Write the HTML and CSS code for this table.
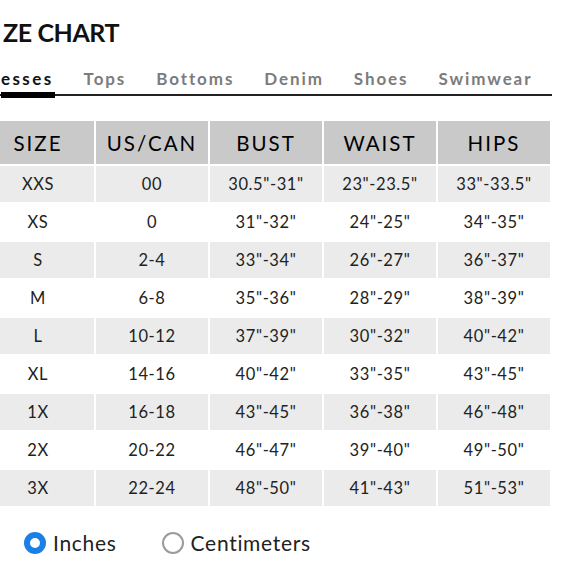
FILE: index.html
```html
<!DOCTYPE html>
<html>
<head>
<meta charset="utf-8">
<link rel="stylesheet" href="styles.css">
</head>
<body>
<div class="page">
  <h1 class="title">ZE CHART</h1>
  <nav class="tabs">
    <span class="tab active">esses</span>
    <span class="tab">Tops</span>
    <span class="tab">Bottoms</span>
    <span class="tab">Denim</span>
    <span class="tab">Shoes</span>
    <span class="tab">Swimwear</span>
  </nav>
  <table class="chart">
    <thead>
      <tr><th>SIZE</th><th>US/CAN</th><th>BUST</th><th>WAIST</th><th>HIPS</th></tr>
    </thead>
    <tbody>
      <tr class="shade"><td>XXS</td><td>00</td><td>30.5"-31"</td><td>23"-23.5"</td><td>33"-33.5"</td></tr>
      <tr><td>XS</td><td>0</td><td>31"-32"</td><td>24"-25"</td><td>34"-35"</td></tr>
      <tr class="shade"><td>S</td><td>2-4</td><td>33"-34"</td><td>26"-27"</td><td>36"-37"</td></tr>
      <tr><td>M</td><td>6-8</td><td>35"-36"</td><td>28"-29"</td><td>38"-39"</td></tr>
      <tr class="shade"><td>L</td><td>10-12</td><td>37"-39"</td><td>30"-32"</td><td>40"-42"</td></tr>
      <tr><td>XL</td><td>14-16</td><td>40"-42"</td><td>33"-35"</td><td>43"-45"</td></tr>
      <tr class="shade"><td>1X</td><td>16-18</td><td>43"-45"</td><td>36"-38"</td><td>46"-48"</td></tr>
      <tr><td>2X</td><td>20-22</td><td>46"-47"</td><td>39"-40"</td><td>49"-50"</td></tr>
      <tr class="shade"><td>3X</td><td>22-24</td><td>48"-50"</td><td>41"-43"</td><td>51"-53"</td></tr>
    </tbody>
  </table>
  <div class="units">
    <label class="unit"><span class="radio on"></span>Inches</label>
    <label class="unit"><span class="radio"></span>Centimeters</label>
  </div>
</div>
</body>
</html>
```
FILE: styles.css
```css
html, body {
  margin: 0;
  padding: 0;
  background: #fff;
  overflow: hidden;
}
body {
  font-family: "Lato", "Open Sans", sans-serif;
  color: #1a1a1a;
}
.page {
  width: 580px;
}
.title {
  margin: 0;
  padding: 16px 0 0 3px;
  font-size: 25px;
  line-height: 32px;
  font-weight: 700;
  letter-spacing: -0.4px;
  color: #111;
}
.tabs {
  display: flex;
  gap: 30px;
  margin-top: 21px;
  width: 552px;
  border-bottom: 2px solid #222;
}
.tab {
  font-size: 17px;
  font-weight: 700;
  letter-spacing: 1.9px;
  color: #7c7c7c;
  line-height: 20px;
  padding-bottom: 5px;
  position: relative;
}
.tab.active {
  color: #111;
  padding-left: 1px;
  letter-spacing: 2.4px;
}
.tab.active::after {
  content: "";
  position: absolute;
  left: 1px;
  right: -1px;
  bottom: -4px;
  height: 6px;
  background: #000;
}
.chart {
  margin: 23px 0 0 -20px;
  width: 572px;
  table-layout: fixed;
  border-collapse: separate;
  border-spacing: 2px;
}
.chart th {
  background: #c9c9c9;
  height: 43px;
  padding: 0;
  font-size: 20.5px;
  font-weight: 400;
  letter-spacing: 2px;
  color: #000;
  text-align: center;
}
.chart td {
  height: 36px;
  padding: 0;
  text-align: center;
  font-size: 16.5px;
  letter-spacing: 0.6px;
  color: #222;
}
.chart tr.shade td {
  background: #ebebeb;
}
.units {
  display: flex;
  gap: 45px;
  margin-top: 22px;
  padding-left: 24px;
}
.unit {
  display: flex;
  align-items: center;
  gap: 7px;
  font-size: 21px;
  letter-spacing: 0.7px;
  color: #222;
}
.radio {
  box-sizing: border-box;
  width: 22px;
  height: 22px;
  border-radius: 50%;
  border: 2px solid #9b9b9b;
  background: #fff;
}
.radio.on {
  border: 6.5px solid #1b7fe6;
}
```
